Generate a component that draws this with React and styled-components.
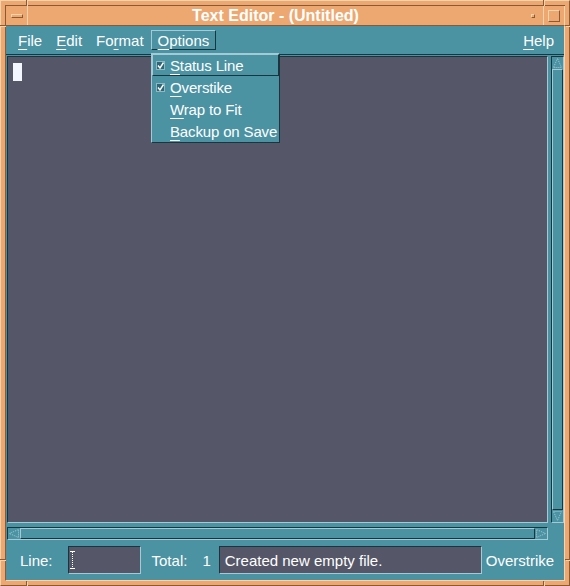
import React from 'react';
import styled, { createGlobalStyle, css } from 'styled-components';

const TEAL = '#4b92a3';
const TEAL_LIGHT = '#a4cbd5';
const TEAL_DARK = '#17363f';
const PANE = '#555768';
const ORANGE = '#eda871';
const ORANGE_LIGHT = '#fbd3ab';
const ORANGE_DARK = '#8a5a37';

const GlobalStyle = createGlobalStyle`
  html, body {
    margin: 0;
    background: ${ORANGE};
  }
`;

const Window = styled.div`
  position: relative;
  width: 570px;
  height: 586px;
  box-sizing: border-box;
  background: ${ORANGE};
  border: 1px solid;
  border-color: ${ORANGE_LIGHT} ${ORANGE_DARK} ${ORANGE_DARK} ${ORANGE_LIGHT};
  padding: 4px;
  display: flex;
  flex-direction: column;
  font-family: 'Liberation Sans', Arial, sans-serif;
  color: #fff;
`;

const Notch = styled.div`
  position: absolute;
  background: ${ORANGE_DARK};
  box-shadow: 1px 1px 0 ${ORANGE_LIGHT};
  ${p => (p.$vertical
    ? css`width: 1px; height: 5px; left: ${p.$at}px; ${p.$side}: -1px;`
    : css`height: 1px; width: 5px; top: ${p.$at}px; ${p.$side}: -1px;`)}
`;

const TitleBar = styled.div`
  display: flex;
  height: 20px;
  box-sizing: border-box;
  border-top: 1px solid ${ORANGE_DARK};
  border-left: 1px solid ${ORANGE_DARK};
`;

const TitleButton = styled.div`
  width: ${p => p.$w}px;
  display: flex;
  align-items: center;
  justify-content: center;
  border-right: 1px solid ${ORANGE_LIGHT};
`;

const MenuGlyph = styled.span`
  width: 12px;
  height: 4px;
  box-sizing: border-box;
  border: 1px solid;
  border-color: ${ORANGE_LIGHT} ${ORANGE_DARK} ${ORANGE_DARK} ${ORANGE_LIGHT};
`;

const MinGlyph = styled(MenuGlyph)`
  width: 4px;
  height: 4px;
`;

const MaxGlyph = styled(MenuGlyph)`
  width: 12px;
  height: 12px;
`;

const Title = styled.div`
  flex: 1;
  text-align: center;
  font-weight: bold;
  font-size: 16px;
  line-height: 19px;
  color: #fff;
`;

const Client = styled.div`
  flex: 1;
  min-height: 0;
  display: flex;
  flex-direction: column;
  background: ${TEAL};
  border: 1px solid;
  border-color: ${ORANGE_DARK} ${ORANGE_LIGHT} ${ORANGE_LIGHT} ${ORANGE_DARK};
`;

const MenuBar = styled.div`
  height: 29px;
  box-sizing: border-box;
  display: flex;
  align-items: center;
  padding: 0 3px 0 5px;
  border-bottom: 1px solid ${TEAL_DARK};
`;

const MenuItem = styled.span`
  height: 20px;
  line-height: 19px;
  padding: 0 6px;
  box-sizing: border-box;
  font-size: 15px;
  border: 1px solid transparent;
  ${p => p.$active && css`
    border-color: ${TEAL_LIGHT} ${TEAL_DARK} ${TEAL_DARK} ${TEAL_LIGHT};
  `}
`;

const Spacer = styled.span`
  flex: 1;
`;

const Mn = styled.span`
  text-decoration: underline;
  text-decoration-thickness: 1px;
  text-underline-offset: 3px;
`;

const Body = styled.div`
  display: flex;
  gap: 3px;
  height: 467px;
  margin: 1px 0 0 1px;
`;

const TextPane = styled.div`
  flex: 1;
  background: ${PANE};
  border: 1px solid;
  border-color: ${TEAL_DARK} ${TEAL_LIGHT} ${TEAL_LIGHT} ${TEAL_DARK};
  padding: 6px 5px;
`;

const Cursor = styled.div`
  width: 9px;
  height: 18px;
  background: #f4f6ff;
`;

const Track = styled.div`
  display: flex;
  flex-direction: ${p => (p.$vertical ? 'column' : 'row')};
  box-sizing: border-box;
  border: 1px solid;
  border-color: ${TEAL_DARK} ${TEAL_LIGHT} ${TEAL_LIGHT} ${TEAL_DARK};
  ${p => (p.$vertical ? css`width: 13px;` : css`height: 13px; width: 541px; margin: 4px 0 0 1px;`)}
`;

const Arrow = styled.div`
  flex: none;
  display: flex;
  align-items: center;
  justify-content: center;
  width: ${p => (p.$vertical ? '11px' : '12px')};
  height: ${p => (p.$vertical ? '12px' : '11px')};
`;

const Thumb = styled.div`
  flex: 1;
  border: 1px solid;
  border-color: ${TEAL_LIGHT} ${TEAL_DARK} ${TEAL_DARK} ${TEAL_LIGHT};
`;

const StatusBar = styled.div`
  height: 40px;
  display: flex;
  align-items: center;
  padding-left: 14px;
  font-size: 15px;
`;

const Label = styled.span`
  margin-left: ${p => p.$ml || 0}px;
`;

const Field = styled.div`
  width: ${p => p.$w}px;
  height: 28px;
  box-sizing: border-box;
  margin-left: ${p => p.$ml}px;
  padding-left: ${p => p.$pl}px;
  display: flex;
  align-items: center;
  background: ${PANE};
  border: 1px solid;
  border-color: ${TEAL_DARK} ${TEAL_LIGHT} ${TEAL_LIGHT} ${TEAL_DARK};
  white-space: nowrap;
`;

const Dropdown = styled.div`
  position: absolute;
  left: 150px;
  top: 52px;
  box-sizing: border-box;
  background: ${TEAL};
  border: 1px solid;
  border-color: ${TEAL_LIGHT} ${TEAL_DARK} ${TEAL_DARK} ${TEAL_LIGHT};
  font-size: 15px;
  letter-spacing: -0.15px;
`;

const DropItem = styled.div`
  height: 22px;
  box-sizing: border-box;
  display: flex;
  align-items: center;
  padding: 0 1px 0 3px;
  white-space: nowrap;
  border: 1px solid transparent;
  ${p => p.$active && css`
    border-color: ${TEAL_LIGHT} ${TEAL_DARK} ${TEAL_DARK} ${TEAL_LIGHT};
  `}
`;

const CheckSlot = styled.span`
  flex: none;
  width: 9px;
  height: 9px;
  margin-right: 5px;
  display: flex;
`;

const ArrowIcon = ({ dir }) => {
  const pts = {
    up: '5.5,1.5 1.5,10.5 9.5,10.5',
    down: '1.5,1.5 9.5,1.5 5.5,10.5',
    left: '1.5,5.5 10.5,1.5 10.5,9.5',
    right: '10.5,5.5 1.5,1.5 1.5,9.5',
  }[dir];
  const vertical = dir === 'up' || dir === 'down';
  return (
    <svg width={vertical ? 11 : 12} height={vertical ? 12 : 11}>
      <polygon points={pts} fill="none" stroke={TEAL_LIGHT} strokeWidth="1" strokeDasharray="1 1" />
    </svg>
  );
};

const Check = () => (
  <svg width="9" height="9">
    <rect x="0.5" y="0.5" width="8" height="8" fill="#2f6676" stroke="#8fb8c3" />
    <path d="M2 4.5 L4 7 L7.5 1.5" fill="none" stroke="#fff" strokeWidth="1.4" />
  </svg>
);

const IBeam = () => (
  <svg width="5" height="18">
    <path d="M0 0.5 H5 M0 17.5 H5" stroke="#fff" strokeWidth="1" />
    <path d="M2.5 1 V17" stroke="#fff" strokeWidth="1" strokeDasharray="1 1" />
  </svg>
);

const ScrollBar = ({ vertical }) => (
  <Track $vertical={vertical}>
    <Arrow $vertical={vertical}><ArrowIcon dir={vertical ? 'up' : 'left'} /></Arrow>
    <Thumb />
    <Arrow $vertical={vertical}><ArrowIcon dir={vertical ? 'down' : 'right'} /></Arrow>
  </Track>
);

const options = [
  { first: 'S', rest: 'tatus Line', checked: true, active: true },
  { first: 'O', rest: 'verstike', checked: true },
  { first: 'W', rest: 'rap to Fit' },
  { first: 'B', rest: 'ackup on Save' },
];

export default function App() {
  return (
    <>
      <GlobalStyle />
      <Window>
        <Notch $vertical $at={25} $side="top" />
        <Notch $vertical $at={542} $side="top" />
        <Notch $vertical $at={25} $side="bottom" />
        <Notch $vertical $at={542} $side="bottom" />
        <Notch $at={24} $side="left" />
        <Notch $at={558} $side="left" />
        <Notch $at={24} $side="right" />
        <Notch $at={558} $side="right" />

        <TitleBar>
          <TitleButton $w={21}><MenuGlyph /></TitleButton>
          <Title>Text Editor - (Untitled)</Title>
          <TitleButton $w={20}><MinGlyph /></TitleButton>
          <TitleButton $w={20}><MaxGlyph /></TitleButton>
        </TitleBar>

        <Client>
          <MenuBar>
            <MenuItem><Mn>F</Mn>ile</MenuItem>
            <MenuItem><Mn>E</Mn>dit</MenuItem>
            <MenuItem>Fo<Mn>r</Mn>mat</MenuItem>
            <MenuItem $active><Mn>O</Mn>ptions</MenuItem>
            <Spacer />
            <MenuItem><Mn>H</Mn>elp</MenuItem>
          </MenuBar>

          <Body>
            <TextPane><Cursor /></TextPane>
            <ScrollBar vertical />
          </Body>
          <ScrollBar />

          <StatusBar>
            <Label>Line:</Label>
            <Field $w={73} $ml={15} $pl={1}><IBeam /></Field>
            <Label $ml={11}>Total:</Label>
            <Label $ml={15}>1</Label>
            <Field $w={263} $ml={8} $pl={5}>Created new empty file.</Field>
            <Label $ml={4}>Overstrike</Label>
          </StatusBar>
        </Client>

        <Dropdown>
          {options.map(o => (
            <DropItem key={o.first} $active={o.active}>
              <CheckSlot>{o.checked && <Check />}</CheckSlot>
              <span><Mn>{o.first}</Mn>{o.rest}</span>
            </DropItem>
          ))}
        </Dropdown>
      </Window>
    </>
  );
}
